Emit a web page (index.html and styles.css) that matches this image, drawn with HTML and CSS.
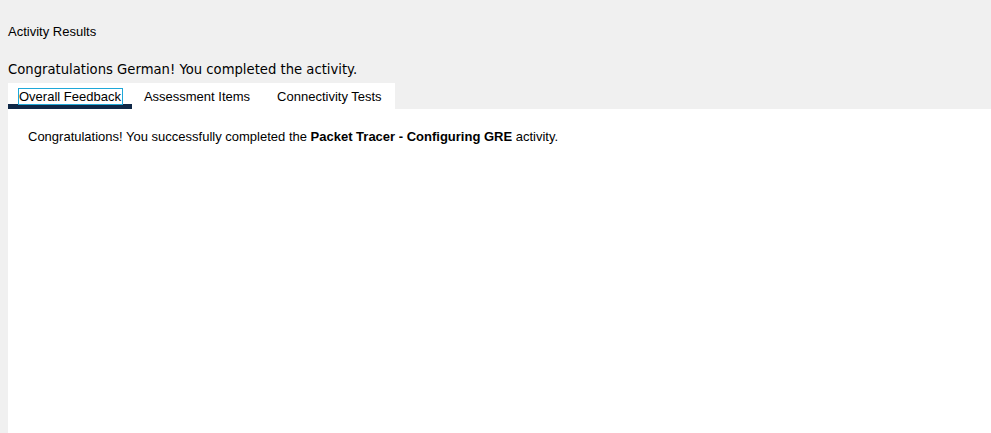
FILE: index.html
```html
<!DOCTYPE html>
<html>
<head>
<meta charset="utf-8">
<link rel="stylesheet" href="styles.css">
</head>
<body>
<div class="page">
  <div class="title">Activity Results</div>
  <div class="greeting">Congratulations German! You completed the activity.</div>
  <div class="tabs">
    <div class="tab active"><span class="focus">Overall Feedback</span></div>
    <div class="tab tab-items">Assessment Items</div>
    <div class="tab tab-tests">Connectivity Tests</div>
  </div>
  <div class="panel">
    <p class="msg">Congratulations! You successfully completed the <b>Packet Tracer - Configuring GRE</b> activity.</p>
  </div>
</div>
</body>
</html>
```

FILE: styles.css
```css
html, body {
  margin: 0;
  padding: 0;
  height: 100%;
  background: #f0f0f0;
}
.page {
  display: flex;
  flex-direction: column;
  height: 100%;
  padding-left: 8px;
  box-sizing: border-box;
  font-family: "Liberation Sans", Arial, sans-serif;
  font-size: 13px;
  color: #000;
}
.title {
  padding-top: 24px;
  line-height: 15px;
  height: 15px;
}
.greeting {
  margin-top: 23px;
  font-family: "DejaVu Sans", Verdana, sans-serif;
  font-size: 13.2px;
  line-height: 16px;
  height: 21px;
}
.tabs {
  display: flex;
  align-self: flex-start;
  background: #fff;
  height: 26px;
}
.tab {
  padding: 6px 12px 0 12px;
  line-height: 15px;
  box-sizing: border-box;
  height: 26px;
}
.tab.active {
  padding-left: 11px;
  padding-right: 10px;
  border-bottom: 5px solid #0f2847;
}
.tab-items {
  padding-right: 15px;
}
.tab-tests {
  padding-right: 13px;
}
.focus {
  outline: 1px solid #1fa8d8;
  outline-offset: 0;
  padding: 0 1px 0 0;
}
.panel {
  flex: 1;
  background: #fff;
}
.msg {
  margin: 0;
  padding: 20px 0 0 20px;
  line-height: 15px;
}
```
